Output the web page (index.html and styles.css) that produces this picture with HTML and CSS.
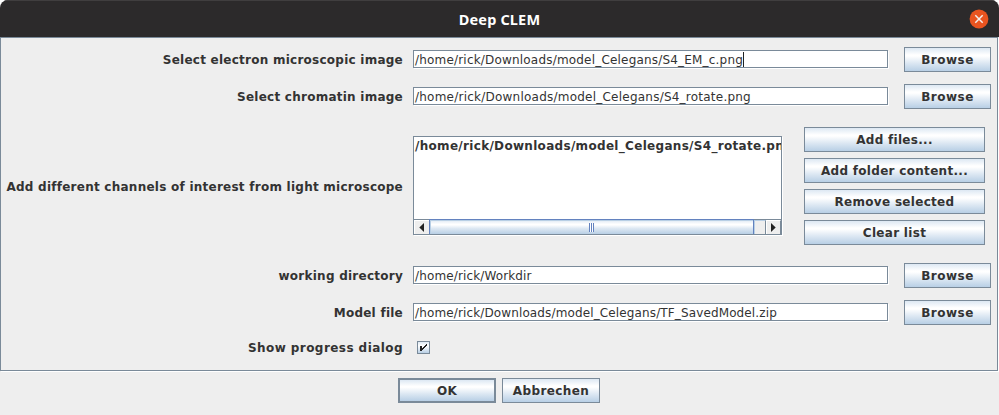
FILE: index.html
```html
<!DOCTYPE html>
<html lang="en">
<head>
<meta charset="utf-8">
<title>Deep CLEM</title>
<link rel="stylesheet" href="styles.css">
</head>
<body>
<div class="window">
  <header class="titlebar">
    <span class="title">Deep CLEM</span>
    <svg class="close" width="20" height="20" viewBox="0 0 20 20"><circle cx="10" cy="10" r="9.4" fill="#e95420"/><path d="M6.3 6.3L13.7 13.7M13.7 6.3L6.3 13.7" stroke="#f4efed" stroke-width="1.5"/></svg>
  </header>
  <main class="panel">
    <div class="row">
      <label class="label">Select electron microscopic image</label>
      <div class="field"><span>/home/rick/Downloads/model_Celegans/S4_EM_c.png</span><i class="caret"></i></div>
      <button class="button browse">Browse</button>
    </div>
    <div class="row">
      <label class="label">Select chromatin image</label>
      <div class="field rotate"><span>/home/rick/Downloads/model_Celegans/S4_rotate.png</span></div>
      <button class="button browse">Browse</button>
    </div>
    <div class="row channels">
      <label class="label">Add different channels of interest from light microscope</label>
      <div class="list">
        <div class="item">/home/rick/Downloads/model_Celegans/S4_rotate.png</div>
        <div class="scrollbar">
          <span class="arrow"><svg width="5" height="9" viewBox="0 0 5 9"><path d="M5 0v9L0.3 4.5z" fill="#222"/></svg></span>
          <span class="thumb"><i class="grip"></i></span>
          <span class="track"></span>
          <span class="arrow next"><svg width="5" height="9" viewBox="0 0 5 9"><path d="M0 0v9L4.7 4.5z" fill="#222"/></svg></span>
        </div>
      </div>
      <div class="actions">
        <button class="button">Add files...</button>
        <button class="button">Add folder content...</button>
        <button class="button">Remove selected</button>
        <button class="button">Clear list</button>
      </div>
    </div>
    <div class="row">
      <label class="label">working directory</label>
      <div class="field short"><span>/home/rick/Workdir</span></div>
      <button class="button browse">Browse</button>
    </div>
    <div class="row">
      <label class="label">Model file</label>
      <div class="field short"><span>/home/rick/Downloads/model_Celegans/TF_SavedModel.zip</span></div>
      <button class="button browse">Browse</button>
    </div>
    <div class="row check-row">
      <label class="label">Show progress dialog</label>
      <span class="checkbox"><svg width="7" height="7" viewBox="0 0 7 7" shape-rendering="crispEdges"><path d="M0 2h2v5h-2zM2 4h1v2h-1zM3 3h1v2h-1zM4 2h1v2h-1zM5 1h1v2h-1zM6 0h1v2h-1z" fill="#222"/></svg></span>
    </div>
  </main>
  <footer class="footer">
    <button class="button default">OK</button>
    <button class="button cancel">Abbrechen</button>
  </footer>
</div>
</body>
</html>
```

FILE: styles.css
```css
* { box-sizing: border-box; }
body {
  margin: 0;
  background: #fff;
  color: #333;
  font: 12px/16px "DejaVu Sans", sans-serif;
}
.window {
  width: 999px;
  height: 415px;
  display: flex;
  flex-direction: column;
  overflow: hidden;
  background: #eee;
  border-radius: 8px 8px 0 0;
}
.titlebar {
  flex: none;
  height: 37px;
  display: grid;
  grid-template-columns: 1fr auto 1fr;
  align-items: center;
  padding-right: 10px;
  padding-left: 10px;
  background: #2c2a2b;
  border-top: 1px solid #403e3f;
}
.title {
  grid-column: 2;
  color: #fff;
  font: bold 14.5px/18px "Noto Sans", sans-serif;
  letter-spacing: 0.15px;
}
.close { justify-self: end; }
.panel {
  flex: none;
  width: 998px;
  height: 334px;
  display: flex;
  flex-direction: column;
  gap: 12px;
  padding: 9px 0 0;
  border: 1px solid #7a8a99;
  box-shadow: 1px 1px #fff;
}
.row {
  height: 25px;
  display: flex;
  align-items: center;
}
.label {
  width: 402px;
  margin-right: 10px;
  padding-top: 1px;
  text-align: right;
  font-weight: bold;
  letter-spacing: 0.25px;
  white-space: nowrap;
}
.field {
  width: 475px;
  height: 18px;
  align-self: flex-start;
  margin-top: 3px;
  margin-right: 16px;
  padding: 1px 0 0 1px;
  display: flex;
  align-items: flex-start;
  background: #fff;
  border: 1px solid #7a8a99;
  box-shadow: 1px 1px #fff;
  letter-spacing: 0.19px;
  white-space: nowrap;
}
.field.rotate { letter-spacing: 0.23px; }
.field.short { letter-spacing: 0.13px; }
.caret {
  width: 1px;
  height: 15px;
  background: #222;
}
.button {
  height: 25px;
  padding: 1px 0 0;
  border: 1px solid #7a8a99;
  border-radius: 0;
  background: linear-gradient(#dde8f3 0, #fff 30%, #fff 35%, #dde8f3 65%, #b8cfe5 100%);
  color: #333;
  font: bold 12px/16px "DejaVu Sans", sans-serif;
  letter-spacing: 0.3px;
}
.browse { width: 87px; letter-spacing: 0.5px; }
.channels { height: 130px; }
.list {
  width: 369px;
  height: 99px;
  align-self: flex-start;
  margin-top: 15px;
  margin-right: 22px;
  display: flex;
  flex-direction: column;
  justify-content: space-between;
  overflow: hidden;
  background: #fff;
  border: 1px solid #7a8a99;
  box-shadow: 1px 1px #fff;
}
.item {
  padding: 1px 0 0 1px;
  font-weight: bold;
  letter-spacing: 0.31px;
  white-space: nowrap;
}
.scrollbar {
  height: 15px;
  display: flex;
  background: #eee;
  border-top: 1px solid #7a8a99;
}
.arrow {
  width: 15px;
  display: flex;
  align-items: center;
  justify-content: center;
  padding-right: 2px;
  border-top: 1px solid #fff;
  border-left: 1px solid #fff;
}
.next { padding-right: 0; border-right: 1px solid #7a8a99; }
.thumb {
  width: 325px;
  height: 15px;
  margin-top: -1px;
  display: flex;
  align-items: center;
  justify-content: center;
  border: solid #6382bf;
  border-width: 1px 1px 0;
  box-shadow: inset 1px 1px #b8cfe5;
  background: linear-gradient(#dde8f3 0, #fff 30%, #fff 35%, #dde8f3 60%, #b8cfe5 100%);
}
.grip {
  width: 5px;
  height: 9px;
  background: repeating-linear-gradient(90deg, #6382bf 0 1px, #fff 1px 2px);
}
.track {
  flex: 1;
  border-top: 1px solid #b8cfe5;
  border-left: 1px solid #b8cfe5;
  border-right: 1px solid #7a8a99;
}
.actions {
  width: 181px;
  display: flex;
  flex-direction: column;
  gap: 6px;
}
.check-row { height: 21px; }
.check-row .label { letter-spacing: 0.44px; }
.checkbox {
  width: 13px;
  height: 13px;
  margin-left: 4px;
  display: flex;
  align-items: flex-start;
  justify-content: center;
  padding-top: 2px;
  border: 1px solid #7a8a99;
  background: linear-gradient(#dde8f3, #fff 35%, #b8cfe5);
}
.footer {
  width: 998px;
  display: flex;
  justify-content: center;
  gap: 6px;
  padding-top: 7px;
}
.footer .button { width: 98px; }
.footer .cancel { letter-spacing: 0.42px; }
.footer .default { border-width: 2px; }
```
